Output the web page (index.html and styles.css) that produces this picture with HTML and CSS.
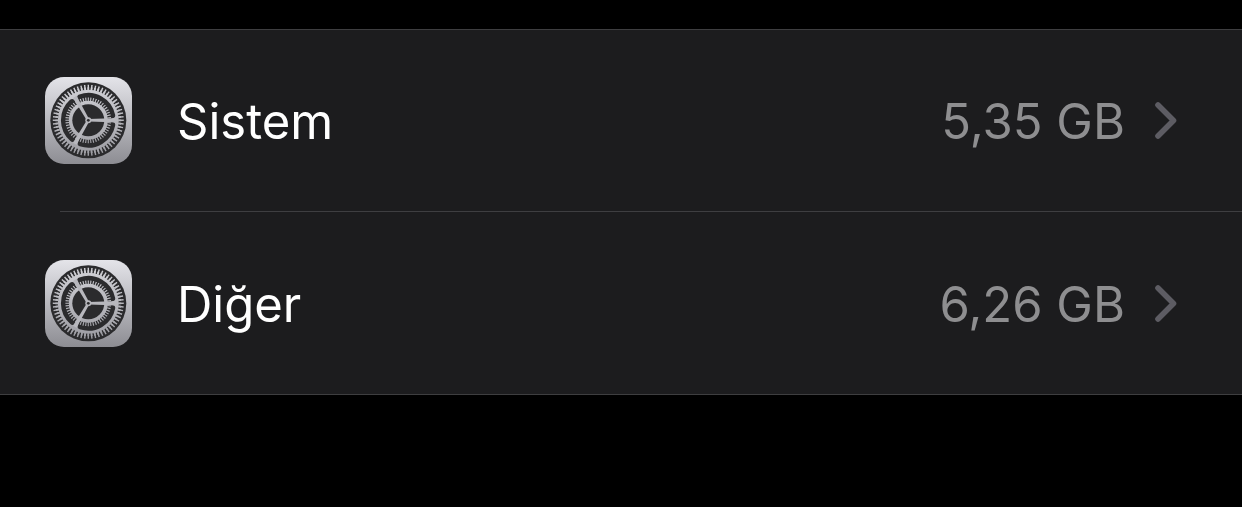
FILE: index.html
```html
<!DOCTYPE html>
<html lang="tr">
<head>
<meta charset="utf-8">
<meta name="viewport" content="width=device-width, initial-scale=1">
<title>Sistem</title>
<link rel="stylesheet" href="styles.css">
</head>
<body>
<svg class="defs" width="0" height="0" aria-hidden="true">
  <defs>
    <linearGradient id="tile" x1="0" y1="0" x2="0" y2="1">
      <stop offset="0" stop-color="#e4e4e9"/>
      <stop offset="1" stop-color="#8d8d93"/>
    </linearGradient>
    <linearGradient id="metal" gradientUnits="userSpaceOnUse" x1="0" y1="-36" x2="0" y2="36">
      <stop offset="0" stop-color="#d2d2d7"/>
      <stop offset="1" stop-color="#9c9ca2"/>
    </linearGradient>
    <symbol id="gear" viewBox="0 0 87 87">
      <rect width="87" height="87" rx="19" fill="url(#tile)"/>
      <g transform="translate(43.3 43.3)" fill="none">
        <circle r="38" fill="#2b2b2d"/>
        <g stroke="url(#metal)">
          <circle r="33" stroke-width="5" pathLength="120" stroke-dasharray=".8 1.2" stroke-dashoffset=".4"/>
          <circle r="31.500" stroke-width="3" pathLength="120" stroke-dasharray="1.1 .9" stroke-dashoffset=".55"/>
        </g>
        <circle r="30.500" fill="url(#metal)"/>
        <g stroke="#2b2b2d" stroke-width="6" stroke-linecap="round">
          <path id="slot" d="M-8-23A24.400 24.400 0 0 1 23.900-5"/>
          <use href="#slot" transform="rotate(120)"/>
          <use href="#slot" transform="rotate(240)"/>
        </g>
        <circle r="21.300" stroke="#2b2b2d" stroke-width="4.400"/>
        <g stroke="url(#metal)">
          <circle r="21" stroke-width="3.800" pathLength="104" stroke-dasharray=".85 1.15" stroke-dashoffset=".42"/>
          <circle r="17.700" stroke-width="3.600"/>
        </g>
        <circle r="16" fill="#2b2b2d"/>
        <g fill="url(#metal)">
          <path id="spoke" d="M0-1.300L16-1.700L27-2.100V2.100L16 1.700L0 1.300Z"/>
          <use href="#spoke" transform="rotate(120)"/>
          <use href="#spoke" transform="rotate(240)"/>
          <circle r="3"/>
        </g>
        <circle r="1.400" fill="#2b2b2d"/>
      </g>
    </symbol>
    <symbol id="chevron" viewBox="0 0 22 37">
      <path d="M3 3L18.500 18.500L3 34" fill="none" stroke="#5d5c63" stroke-width="5.600" stroke-linecap="round" stroke-linejoin="round"/>
    </symbol>
  </defs>
</svg>
<main class="page">
  <ul class="list">
    <li class="item">
      <a class="row" href="#sistem">
        <svg class="icon" aria-hidden="true"><use href="#gear"/></svg>
        <span class="name">Sistem</span>
        <span class="size">5,35 GB</span>
        <svg class="chevron" aria-hidden="true"><use href="#chevron"/></svg>
      </a>
    </li>
    <li class="item">
      <a class="row" href="#diger">
        <svg class="icon" aria-hidden="true"><use href="#gear"/></svg>
        <span class="name">Diğer</span>
        <span class="size">6,26 GB</span>
        <svg class="chevron" aria-hidden="true"><use href="#chevron"/></svg>
      </a>
    </li>
  </ul>
</main>
</body>
</html>
```
FILE: styles.css
```css
body {
  margin: 0;
  background: #000;
  color: #fff;
  font-family: Inter, "Liberation Sans", sans-serif;
}

.defs {
  position: absolute;
}

.page {
  padding-top: 29px;
}

.list {
  margin: 0;
  padding: 0;
  list-style: none;
  background: #1c1c1e;
  border-top: 1px solid #3e3e40;
  border-bottom: 1px solid #3e3e40;
}

.item + .item::before {
  content: "";
  display: block;
  height: 1px;
  margin-left: 60px;
  background: #3e3e41;
}

.row {
  display: flex;
  align-items: center;
  padding: 47px 65px 47px 45px;
  color: inherit;
  text-decoration: none;
  font-size: 49px;
  line-height: 60px;
}

.item + .item .row {
  padding-top: 48px;
}

.icon {
  flex: none;
  width: 87px;
  height: 87px;
}

.name,
.size {
  padding-top: 2px;
}

.name {
  flex: 1;
  margin-left: 45px;
}

.size {
  color: #8e8e90;
}

.chevron {
  flex: none;
  width: 22px;
  height: 37px;
  margin-left: 30px;
}
```
